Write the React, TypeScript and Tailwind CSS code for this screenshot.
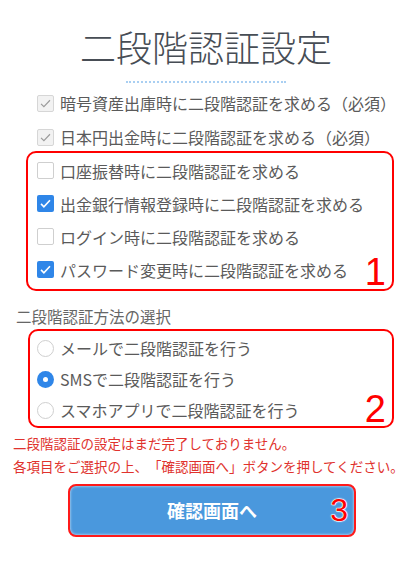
const jp = { fontFamily: '"Noto Sans CJK JP", "Noto Sans", sans-serif' };

type BoxProps = { checked?: boolean; disabled?: boolean };

function CheckBox({ checked, disabled }: BoxProps) {
  if (disabled) {
    return (
      <span className="flex h-[17px] w-[17px] shrink-0 items-center justify-center rounded-[2px] border border-[#d6d6d6] bg-[#f2f2f2]">
        <svg viewBox="0 0 16 16" className="h-[13px] w-[13px]" fill="none" stroke="#9a9a9a" strokeWidth="1.4">
          <path d="M2.5 8.5l3.5 3.5 7.5-8" />
        </svg>
      </span>
    );
  }
  if (checked) {
    return (
      <span className="flex h-[17px] w-[17px] shrink-0 items-center justify-center rounded-[2px] bg-[#2f86e8]">
        <svg viewBox="0 0 16 16" className="h-[13px] w-[13px]" fill="none" stroke="#fff" strokeWidth="2">
          <path d="M2.5 8.5l3.5 3.5 7.5-8" />
        </svg>
      </span>
    );
  }
  return <span className="h-[17px] w-[17px] shrink-0 rounded-[2px] border border-[#cfcfcf] bg-white" />;
}

function Radio({ checked }: { checked?: boolean }) {
  if (checked) {
    return (
      <span className="flex h-[17px] w-[17px] shrink-0 items-center justify-center rounded-full bg-[#2f86e8]">
        <span className="h-[5px] w-[5px] rounded-full bg-white" />
      </span>
    );
  }
  return <span className="h-[17px] w-[17px] shrink-0 rounded-full border border-[#cfcfcf] bg-white" />;
}

const rows = [
  { label: '口座振替時に二段階認証を求める', checked: false },
  { label: '出金銀行情報登録時に二段階認証を求める', checked: true },
  { label: 'ログイン時に二段階認証を求める', checked: false },
  { label: 'パスワード変更時に二段階認証を求める', checked: true },
];

const methods = [
  { label: 'メールで二段階認証を行う', checked: false },
  { label: 'SMSで二段階認証を行う', checked: true },
  { label: 'スマホアプリで二段階認証を行う', checked: false },
];

function Num({ n }: { n: string }) {
  return (
    <span
      className="absolute right-[6px] bottom-[-2px] text-[38px] leading-none text-[#ff0000]"
      style={{ fontFamily: '"Liberation Sans", Arial, sans-serif' }}
    >
      {n}
    </span>
  );
}

export default function App() {
  return (
    <div className="min-h-[580px] w-[412px] bg-white pt-[22px] text-[#5a5a5a] [text-spacing-trim:space-all]" style={jp}>
      <h1 className="h-[48px] text-center text-[36px] font-light leading-[48px] text-[#474d55]">二段階認証設定</h1>
      <div className="mx-auto mt-[11px] w-[160px] border-b-2 border-dotted border-[#a9cff2]" />

      <div className="mt-[6px] flex flex-col gap-[6px] pl-[37px]">
        <label className="flex h-[28px] items-center gap-[6px] text-[16px]">
          <CheckBox disabled />
          <span>暗号資産出庫時に二段階認証を求める（必須）</span>
        </label>
        <label className="flex h-[28px] items-center gap-[6px] text-[16px]">
          <CheckBox disabled />
          <span>日本円出金時に二段階認証を求める（必須）</span>
        </label>
      </div>

      <div className="relative ml-[26px] mr-[18px] rounded-[10px] border-2 border-[#ff0000] pt-[1px] pb-[3px] pl-[9px]">
        {rows.map((r) => (
          <label key={r.label} className="flex h-[33px] items-center gap-[6px] text-[16px]">
            <CheckBox checked={r.checked} />
            <span>{r.label}</span>
          </label>
        ))}
        <Num n="1" />
      </div>

      <p className="mt-[14px] h-[22px] pl-[16px] text-[15.5px] leading-[22px] text-[#666]">二段階認証方法の選択</p>

      <div className="relative mt-[2px] ml-[28px] mr-[18px] rounded-[10px] border-2 border-[#ff0000] pt-[1.5px] pl-[7px]">
        {methods.map((m) => (
          <label key={m.label} className="flex h-[31px] items-center gap-[6px] text-[16px]">
            <Radio checked={m.checked} />
            <span>{m.label}</span>
          </label>
        ))}
        <Num n="2" />
      </div>

      <div className="mt-[4px] pl-[13px] text-[13.5px] leading-[23px] text-[#e0322d]">
        <p>二段階認証の設定はまだ完了しておりません。</p>
        <p>各項目をご選択の上、「確認画面へ」ボタンを押してください。</p>
      </div>

      <button className="relative mt-[6px] ml-[68px] flex h-[53px] w-[288px] items-center justify-center rounded-[8px] border-2 border-[#ff1a1a] bg-[#4a98dd] shadow-[inset_0_0_3px_rgba(255,255,255,0.8)]">
        <span className="text-[18px] font-bold text-white">確認画面へ</span>
        <span
          className="absolute right-[6px] top-[8px] text-[32px] leading-none text-[#ff0000] [-webkit-text-stroke:1px_#fff] [paint-order:stroke_fill]"
          style={{ fontFamily: '"Liberation Sans", Arial, sans-serif', textShadow: '0 0 2px #fff, 0 0 2px #fff' }}
        >
          3
        </span>
      </button>
    </div>
  );
}
